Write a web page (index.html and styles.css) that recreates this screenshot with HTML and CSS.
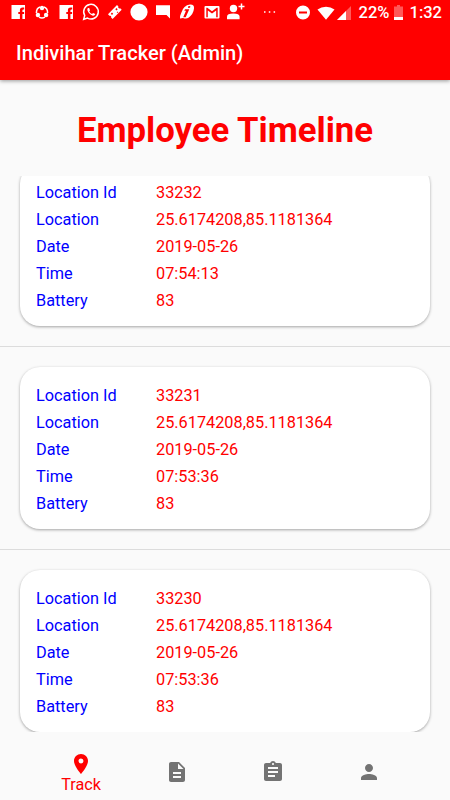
FILE: index.html
```html
<!DOCTYPE html>
<html lang="en">
    <head>
        <meta charset="utf-8">
        <meta name="viewport" content="width=device-width, initial-scale=1">
        <title>Indivihar Tracker</title>
        <link rel="stylesheet" href="styles.css">
    </head>
    <body>
        <header>
            <div class="statusbar">
                <div class="notifications">
                    <svg viewBox="0 0 24 24"><path fill-rule="evenodd" d="M5.500 5h13.500v14h-2.600v-5h1.700v-2h-1.700v-1.500q0-1 1-1h.8v-2h-1.600q-2.700 0-2.700 2.700V12h-1.600v2h1.600v5H5.500z"/></svg>
                    <svg viewBox="0 0 24 24"><circle cx="12" cy="8" r="2.200"/><circle cx="7.900" cy="15" r="2.200"/><circle cx="16.100" cy="15" r="2.200"/><path class="line" d="M10 7q-3.600 1.200-3.600 6M14 7q3.600 1.200 3.600 6M9 17.200q3 1.600 6 0"/></svg>
                    <svg viewBox="0 0 24 24"><path fill-rule="evenodd" d="M5.500 5h13.500v14h-2.600v-5h1.700v-2h-1.700v-1.500q0-1 1-1h.8v-2h-1.600q-2.700 0-2.700 2.700V12h-1.600v2h1.600v5H5.500z"/></svg>
                    <svg viewBox="0 0 24 24"><path class="line" d="M4.700 19.300l1-3.900a7.300 7.300 0 1 1 2.800 2.700z"/><path d="M9 8q-1 .8-.6 2.300 1.200 4 5.400 5.400 1.900.3 2.500-1.600l-2.200-1.200-1.100 1.100q-2-.8-2.800-2.700l.8-.9L10.200 8z"/></svg>
                    <svg viewBox="0 0 24 24"><path fill-rule="evenodd" d="M5 14.200L14 5l1.400 1.400a1.300 1.300 0 0 0 1.800 1.800l1.500 1.500L9.600 19l-1.500-1.500a1.300 1.300 0 0 0-1.700-1.700zM13.500 8l-1.200 1.200 1.200 1.200 1.200-1.200zM14.500 11.500l-.8.8.8.8.8-.8zM9 12.500l-1.200 1.200L9 14.900l1.200-1.200z"/></svg>
                    <svg viewBox="0 0 24 24"><circle cx="12" cy="12" r="8.600"/></svg>
                    <svg viewBox="0 0 24 24"><path d="M5 5.200h14v13.300L15.500 15H5z"/></svg>
                    <svg viewBox="0 0 24 24"><path fill-rule="evenodd" d="M5 18.500q-.5-2 1.200-5.500Q8.500 5 15 4.500q4.500-.2 4 4-.5 5.500-5.500 9.200-2 1.500-5.500.3zM13.300 6.200q-.8 1 .2 1.700 1.300.2 1.900-1 .2-1.300-2.100-.7zM10 9.200l-.7 1.500 1.700.1-2.800 6.500h2.500l3.600-8.100z"/></svg>
                    <svg viewBox="0 0 24 24"><path fill-rule="evenodd" d="M5.500 6h13q1 0 1 1v10.500q0 1-1 1h-13q-1 0-1-1V7q0-1 1-1zM6.300 7.700v9.500h1.500v-6.600l4.200 3 4.200-3v6.600h1.500V7.700h-1L12 11.300 7.300 7.700z"/></svg>
                    <svg viewBox="0 0 24 24"><circle cx="9.500" cy="8.500" r="3.700"/><path d="M3 19.300v-2.500q0-3.300 6.300-3.300t6.300 3.300v2.500z"/><path class="line" d="M17.500 3.500v6M14.500 6.500h6"/></svg>
                    <svg class="more" viewBox="0 0 24 24"><path d="M6 11.200h1.500v1.500H6zM10.800 11.200h1.500v1.500h-1.500zM15.600 11.200h1.500v1.500h-1.500z"/></svg>
                </div>
                <div class="system">
                    <svg width="14" height="15" viewBox="0 0 14 15"><path fill-rule="evenodd" d="M7 .5a7 7 0 1 1 0 14 7 7 0 0 1 0-14zM3 6.400v2.200h8V6.400z"/></svg>
                    <svg class="wifi" width="18" height="14" viewBox="0 0 19 14"><path d="M.5 3.200Q4.500.3 9.500.3t9 2.900L9.500 14z"/></svg>
                    <svg class="signal" width="14" height="14" viewBox="0 0 14 14"><path class="dim" d="M14 0v14H0z"/><path d="M9 5v9H0z"/></svg>
                    <span class="percent">22%</span>
                    <svg class="battery" width="9" height="15" viewBox="0 0 9 15"><path class="dim" d="M3 0h3v1.500h3V12H0V1.500h3z"/><path d="M0 12h9v3H0z"/></svg>
                    <span class="clock">1:32</span>
                </div>
            </div>
            <h1>Indivihar Tracker (Admin)</h1>
        </header>

        <h2>Employee Timeline</h2>

        <main>
            <div class="timeline">
                <div class="entry">
                    <dl class="card">
                        <dt>Location Id</dt><dd>33232</dd>
                        <dt>Location</dt><dd>25.6174208,85.1181364</dd>
                        <dt>Date</dt><dd>2019-05-26</dd>
                        <dt>Time</dt><dd>07:54:13</dd>
                        <dt>Battery</dt><dd>83</dd>
                    </dl>
                </div>

                <div class="entry">
                    <dl class="card">
                        <dt>Location Id</dt><dd>33231</dd>
                        <dt>Location</dt><dd>25.6174208,85.1181364</dd>
                        <dt>Date</dt><dd>2019-05-26</dd>
                        <dt>Time</dt><dd>07:53:36</dd>
                        <dt>Battery</dt><dd>83</dd>
                    </dl>
                </div>

                <div class="entry">
                    <dl class="card">
                        <dt>Location Id</dt><dd>33230</dd>
                        <dt>Location</dt><dd>25.6174208,85.1181364</dd>
                        <dt>Date</dt><dd>2019-05-26</dd>
                        <dt>Time</dt><dd>07:53:36</dd>
                        <dt>Battery</dt><dd>83</dd>
                    </dl>
                </div>
            </div>
        </main>

        <nav>
            <a class="active">
                <svg viewBox="0 0 24 24"><path d="M12 2C8.130 2 5 5.130 5 9c0 5.250 7 13 7 13s7-7.750 7-13c0-3.870-3.130-7-7-7zm0 9.500a2.500 2.500 0 0 1 0-5 2.500 2.500 0 0 1 0 5z"/></svg>
                <span>Track</span>
            </a>
            <a>
                <svg viewBox="0 0 24 24"><path d="M14 2H6c-1.100 0-1.990.9-1.990 2L4 20c0 1.100.89 2 1.990 2H18c1.100 0 2-.9 2-2V8l-6-6zm2 16H8v-2h8v2zm0-4H8v-2h8v2zm-3-5V3.500L18.500 9H13z"/></svg>
            </a>
            <a>
                <svg viewBox="0 0 24 24"><path d="M19 3h-4.180C14.400 1.840 13.300 1 12 1s-2.400.84-2.820 2H5c-1.100 0-2 .9-2 2v14c0 1.100.9 2 2 2h14c1.100 0 2-.9 2-2V5c0-1.100-.9-2-2-2zm-7 0c.55 0 1 .45 1 1s-.45 1-1 1-1-.45-1-1 .45-1 1-1zm2 14H7v-2h7v2zm3-4H7v-2h10v2zm0-4H7V7h10v2z"/></svg>
            </a>
            <a>
                <svg viewBox="0 0 24 24"><path d="M12 12c2.210 0 4-1.790 4-4s-1.790-4-4-4-4 1.790-4 4 1.790 4 4 4zm0 2c-2.670 0-8 1.340-8 4v2h16v-2c0-2.660-5.330-4-8-4z"/></svg>
            </a>
        </nav>
    </body>
</html>
```
FILE: styles.css
```css
*{
    box-sizing: border-box;
}
body{
    margin: 0;
    height: 800px;
    display: flex;
    flex-direction: column;
    overflow: hidden;
    background: #fafafa;
    font-family: Roboto, sans-serif;
}
header{
    height: 80px;
    background: #ff0000;
    color: white;
    box-shadow: 0 1px 4px rgba(0,0,0,0.4);
}
.statusbar{
    height: 25px;
    display: flex;
    justify-content: space-between;
    padding: 0 8px 0 6px;
    fill: white;
}
.notifications{
    display: flex;
    gap: 0.2px;
}
.notifications svg{
    width: 24px;
    height: 24px;
}
.notifications .more{
    margin-left: 10px;
}
.line{
    fill: none;
    stroke: white;
    stroke-width: 1.5;
}
.dim{
    fill: rgba(255,255,255,0.35);
}
.system{
    display: flex;
    align-items: center;
    font-size: 16.5px;
    font-weight: 500;
}
.wifi{
    margin-left: 7px;
}
.signal{
    margin-left: 2px;
}
.percent{
    margin-left: 8px;
}
.battery{
    margin-left: 4px;
}
.clock{
    margin-left: 7px;
}
h1{
    margin: 0;
    padding-left: 16px;
    font-size: 20.1px;
    font-weight: 500;
    line-height: 56px;
}
h2{
    margin: 0;
    height: 96px;
    line-height: 101px;
    font-size: 34.7px;
    font-weight: 700;
    text-align: center;
    color: #ff0000;
}
main{
    height: 556px;
    overflow: hidden;
}
/* first entry is scrolled partly under the title */
.timeline{
    margin-top: -32px;
}
.entry{
    padding: 20px;
    border-bottom: 1px solid #dcdcdc;
}
.card{
    display: grid;
    grid-template-columns: 120px 1fr;
    grid-auto-rows: 27px;
    margin: 0;
    height: 162px;
    padding: 15px 16px 12px;
    border-radius: 20px;
    background: white;
    box-shadow: 0 1px 3px rgba(0,0,0,0.35);
    font-size: 16.3px;
    line-height: 27px;
}
dt{
    color: #0000ff;
}
dd{
    margin: 0;
    color: #ff0000;
}
nav{
    height: 68px;
    display: flex;
    padding: 0 33px;
}
nav a{
    flex: 1;
    display: flex;
    flex-direction: column;
    align-items: center;
    justify-content: center;
    padding-top: 12px;
    fill: #737373;
}
nav svg{
    width: 24px;
    height: 24px;
}
nav .active{
    padding-top: 13px;
    fill: #ff0000;
    color: #ff0000;
    font-size: 16.2px;
    line-height: 18px;
}
```
